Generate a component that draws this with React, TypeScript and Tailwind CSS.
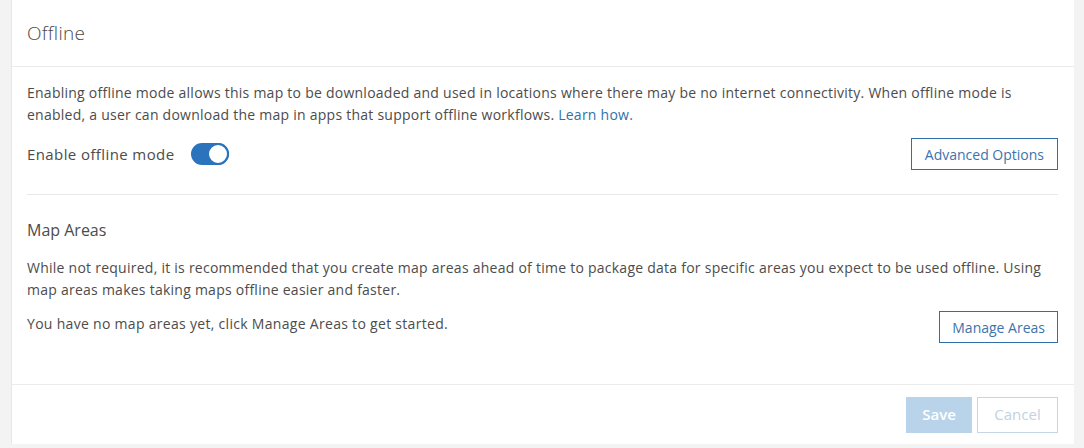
import React from "react";

const font = { fontFamily: '"Open Sans", "Noto Sans", sans-serif' };

export default function App() {
  return (
    <div
      className="w-[1084px] h-[448px] bg-[#f3f3f3] flex pl-[11px] pr-[10px] pb-[4px] overflow-hidden"
      style={font}
    >
      <div className="flex-1 bg-white border-l border-[#e8e8e8] flex flex-col">
        {/* Header */}
        <div className="h-[67px] border-b border-[#ececec] px-[15px] flex items-center shrink-0">
          <h1 className="text-[19px] font-light tracking-[0.3px] text-[#4a4a4a] leading-none">Offline</h1>
        </div>

        {/* Body */}
        <div className="pl-[15px] pr-[16px] pt-[15px] flex flex-col">
          <p className="text-[14px] leading-[22px] tracking-[0.25px] text-[#4c4c4c]">
            Enabling offline mode allows this map to be downloaded and used in locations where there may be no
            internet connectivity. When offline mode is enabled, a user can download the map in apps that support
            offline workflows. <a className="text-[#2f71ad]" href="#">Learn how.</a>
          </p>

          <div className="mt-[12px] flex items-center justify-between h-[32px]">
            <div className="flex items-center gap-[17px]">
              <span className="text-[15px] tracking-[0.4px] text-[#4c4c4c]">Enable offline mode</span>
              <div className="w-[38px] h-[22px] rounded-full bg-[#2b74bd] relative">
                <div className="absolute right-0 top-0 w-[22px] h-[22px] rounded-full bg-white border-[2px] border-[#2b74bd]" />
              </div>
            </div>
            <button className="h-[32px] px-[13px] border border-[#2f6ea6] text-[#3c74ab] text-[14px] bg-white">
              Advanced Options
            </button>
          </div>

          <div className="mt-[24px] border-t border-[#e8e8e8]" />

          <h2 className="mt-[25px] text-[16px] leading-[20px] text-[#4c4c4c]">Map Areas</h2>

          <p className="mt-[17px] text-[14px] leading-[22px] tracking-[0.25px] text-[#4c4c4c]">
            While not required, it is recommended that you create map areas ahead of time to package data for specific
            areas you expect to be used offline. Using map areas makes taking maps offline easier and faster.
          </p>

          <div className="mt-[2px] flex items-start justify-between">
            <span className="mt-[10px] text-[14px] leading-[22px] tracking-[0.3px] text-[#4c4c4c]">
              You have no map areas yet, click Manage Areas to get started.
            </span>
            <button className="mt-[8px] h-[32px] px-[12px] border border-[#2f6ea6] text-[#3c74ab] text-[14px] bg-white">
              Manage Areas
            </button>
          </div>
        </div>

        <div className="flex-1" />

        {/* Footer */}
        <div className="border-t border-[#ececec] h-[60px] pl-[15px] pr-[16px] flex items-center justify-end gap-[5px] shrink-0">
          <button className="h-[36px] w-[66px] bg-[#b9d4ea] text-white text-[15px] font-semibold">Save</button>
          <button className="h-[36px] w-[81px] border border-[#c6d6e6] text-[#c3d2e1] text-[15px] bg-white">
            Cancel
          </button>
        </div>
      </div>
    </div>
  );
}
